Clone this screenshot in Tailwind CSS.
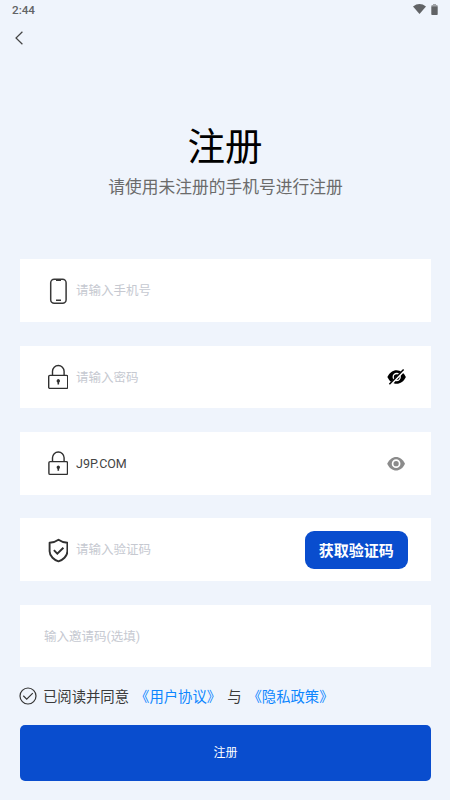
<!DOCTYPE html>
<html lang="zh-CN">
<head>
<meta charset="utf-8">
<meta name="viewport" content="width=device-width, initial-scale=1">
<title>注册</title>
<script src="https://cdn.jsdelivr.net/npm/@tailwindcss/browser@4"></script>
</head>
<body class="h-[800px] w-[450px] overflow-hidden bg-[#eff4fc] font-[Roboto,'Noto_Sans_CJK_SC',sans-serif]">
<!-- Status bar -->
<header class="flex h-5 items-center justify-between pr-3 pl-3 text-[#616366]">
  <span class="text-[11.7px] leading-5 font-medium">2:44</span>
  <div class="flex items-center gap-[5px]">
    <svg class="-mt-0.5 h-[10px] w-[13px]" viewBox="0 0 13 10" fill="currentColor"><path d="M0 2.4Q6.5-2.4 13 2.4L6.5 10Z"/></svg>
    <svg class="-mt-0.5 h-[11px] w-[7px]" viewBox="0 0 7 11"><path fill="#a0a3a7" d="M2 0h3v1h1.5v1.2h-6V1H2z"/><path fill="currentColor" d="M.3 2.2h6.4v8a.8.8 0 0 1-.8.8H1.1a.8.8 0 0 1-.8-.8z"/></svg>
  </div>
</header>
<nav class="flex h-9 items-center pl-[15px]">
  <svg class="h-[14px] w-2" viewBox="0 0 8 14" fill="none" stroke="#444" stroke-width="1.2"><path d="M7.4.7L1 7l6.4 6.3"/></svg>
</nav>
<!-- Heading -->
<div class="flex h-[203.3px] flex-col items-center pt-[64px]">
  <h1 class="h-[55px] text-[37.5px] leading-[54px] text-black">注册</h1>
  <p class="h-6 pl-[1px] text-[16.75px] leading-6 text-[#6b6b6b]">请使用未注册的手机号进行注册</p>
</div>
<!-- Form -->
<form class="flex w-[431px] flex-col gap-[23.8px] pl-5 text-[12.5px] text-[#c6c9d1]">
  <div class="flex h-[62.6px] items-center bg-white pl-7">
    <svg class="mr-2 h-[26px] w-5" viewBox="0 0 20 26" fill="none" stroke="#383838"><rect x="2.7" y="1.2" width="15.4" height="24" rx="3.5" stroke-width="1.5"/><path d="M8 2.2h5M8 22.3h5" stroke-width="1.5"/></svg>
    <span class="pt-[2px]">请输入手机号</span>
  </div>
  <div class="flex h-[62.6px] items-center bg-white pr-6 pl-7">
    <svg class="mr-2 h-[26px] w-5" viewBox="0 0 20 26" fill="none" stroke="#303030" stroke-width="1.4"><rect x=".7" y="11.4" width="19" height="13" rx="1.2"/><path d="M4.5 11V7.3a5.8 5.8 0 0 1 11.6 0V11"/><path fill="#303030" stroke="none" d="M10.3 15.1a1.9 1.9 0 0 1 .8 3.5v1.9H9.5v-1.9a1.9 1.9 0 0 1 .8-3.5z"/></svg>
    <span class="flex-1 pt-[2px]">请输入密码</span>
    <svg class="h-5 w-5" viewBox="0 0 20 20"><path fill="#000" d="M.4 10C2.5 5.5 5.8 3.2 9.6 3.2S16.7 5.5 18.9 10c-2.2 4.5-5.5 6.8-9.3 6.8S2.5 14.5.4 10z"/><circle cx="9.7" cy="10" r="3.5" fill="none" stroke="#fff" stroke-width="1.3"/><path stroke="#fff" stroke-width="2.8" d="M3.1 17.8L17.4 2.9"/><path stroke="#000" stroke-width="1.5" d="M2.4 17.3L16.6 2.6"/></svg>
  </div>
  <div class="flex h-[62.6px] items-center bg-white pr-6 pl-7">
    <svg class="mr-2 h-[26px] w-5" viewBox="0 0 20 26" fill="none" stroke="#303030" stroke-width="1.4"><rect x=".9" y="11.6" width="18.6" height="12.8" rx="1.2"/><path d="M4.5 11.5V7.8a5.8 5.8 0 0 1 11.6 0v3.7"/><path fill="#303030" stroke="none" d="M10.3 15.4a1.9 1.9 0 0 1 .8 3.5v1.9H9.5v-1.9a1.9 1.9 0 0 1 .8-3.5z"/></svg>
    <span class="flex-1 pt-px text-[#444]">J9P.COM</span>
    <svg class="h-5 w-5" viewBox="0 0 20 20"><path fill="#8b8b8b" d="M.2 10.7C2.3 6.2 5.6 3.9 9.1 3.9s6.8 2.3 8.9 6.8c-2.1 4.5-5.4 6.8-8.9 6.8S2.3 15.2.2 10.7z"/><circle cx="9.1" cy="10.7" r="3.5" fill="none" stroke="#fff" stroke-width="1.7"/></svg>
  </div>
  <div class="flex h-[62.6px] items-center bg-white pr-[23.5px] pl-7">
    <svg class="mr-2 h-[26px] w-5" viewBox="0 0 20 26" fill="none" stroke="#303030" stroke-width="1.9"><path stroke-linejoin="round" d="M10.5 2.8C8 4.6 5 5.6 1.6 5.8v8.5c0 5 4.8 8.9 8.9 10.1 4.1-1.2 8.9-5.1 8.9-10.1V5.8C16 5.6 13 4.6 10.5 2.8z"/><path d="M5.9 13.2l3.4 3.5 6.1-6"/></svg>
    <span class="flex-1 pt-[2px]">请输入验证码</span>
    <button type="button" class="mt-[1px] h-[38.4px] w-[102.6px] rounded-[9px] bg-[#094dce] pt-px text-[15px] font-bold text-white">获取验证码</button>
  </div>
  <div class="flex h-[62.6px] items-center bg-white pl-6"><span class="pt-[2px]">输入邀请码(选填)</span></div>
</form>
<!-- Agreement and submit -->
<div class="mt-[17px] flex h-6 items-center pl-[19px] text-[14.35px] leading-6 whitespace-nowrap text-[#3a3a3a]">
  <svg class="mr-[6px] h-[18px] w-[18px] shrink-0" viewBox="0 0 18 18" fill="none" stroke="#333" stroke-width="1.2"><circle cx="9" cy="9" r="8"/><path d="M4.3 8.8l3.4 3.3 6.1-6"/></svg>
  <span class="pt-[3px]">已阅读并同意</span>
  <a class="ml-[6px] pt-[3px] text-[#0d86ff]">《用户协议》</a>
  <span class="ml-[6px] pt-[3px]">与</span>
  <a class="ml-[6px] pt-[3px] text-[#0d86ff]">《隐私政策》</a>
</div>
<button type="button" class="mt-[16.7px] ml-5 block h-[56px] w-[411px] rounded-[5px] bg-[#094dce] text-[12px] text-white">注册</button>
</body>
</html>
